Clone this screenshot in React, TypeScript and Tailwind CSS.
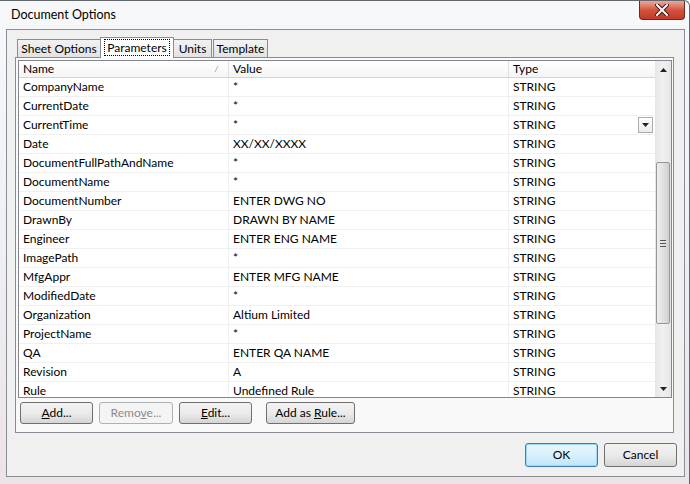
import React from "react";

const rows: [string, string][] = [
  ["CompanyName", "*"],
  ["CurrentDate", "*"],
  ["CurrentTime", "*"],
  ["Date", "XX/XX/XXXX"],
  ["DocumentFullPathAndName", "*"],
  ["DocumentName", "*"],
  ["DocumentNumber", "ENTER DWG NO"],
  ["DrawnBy", "DRAWN BY NAME"],
  ["Engineer", "ENTER ENG NAME"],
  ["ImagePath", "*"],
  ["MfgAppr", "ENTER MFG NAME"],
  ["ModifiedDate", "*"],
  ["Organization", "Altium Limited"],
  ["ProjectName", "*"],
  ["QA", "ENTER QA NAME"],
  ["Revision", "A"],
  ["Rule", "Undefined Rule"],
];

const Arrow = ({ down = false }: { down?: boolean }) => (
  <svg width="7" height="4" viewBox="0 0 7 4">
    {down ? <path d="M0 0h7L3.5 4z" fill="#222" /> : <path d="M0 4h7L3.5 0z" fill="#222" />}
  </svg>
);

const Button = ({
  children,
  w,
  disabled = false,
  primary = false,
  h = "h-[22px]",
}: {
  children: React.ReactNode;
  w: string;
  disabled?: boolean;
  primary?: boolean;
  h?: string;
}) => {
  let cls = "border-[#707070] bg-gradient-to-b from-[#f2f2f2] via-[#ebebeb] to-[#d5d5d5] text-black";
  if (disabled) cls = "border-[#adb2b5] bg-[#f4f4f4] text-[#8b8b8b]";
  if (primary) cls = "border-[#3c7fb1] bg-gradient-to-b from-[#eaf6fd] via-[#d9f0fc] to-[#bee6fd] text-black shadow-[inset_0_0_0_1px_#9fd6f5]";
  return (
    <div className={`${w} ${h} ${cls} border rounded-[3px] flex items-center justify-center text-[12px]`}>
      {children}
    </div>
  );
};

const Tab = ({ label, w }: { label: string; w: string }) => (
  <div className={`${w} h-[18px] border border-b-0 border-[#898c95] bg-gradient-to-b from-[#f2f2f2] to-[#e3e3e3] flex items-center justify-center text-[12px]`}>
    {label}
  </div>
);

export default function App() {
  return (
    <div
      className="w-[690px] h-[484px] overflow-hidden flex flex-col bg-gradient-to-b from-[#f7f8fa] via-[#eef0f4] to-[#ece3e7] border-t border-r border-[#62676e] rounded-tr-[6px] text-black"
      style={{ fontFamily: 'Lato, "Noto Sans", sans-serif' }}
    >
      {/* title bar */}
      <div className="h-[28px] flex items-start justify-between">
        <div className="pl-[11px] pt-[6px] text-[12.5px] leading-[16px]">Document Options</div>
        <div className="mr-[4px] w-[46px] h-[19px] rounded-b-[4px] border border-t-0 border-[#6b2a22] bg-gradient-to-b from-[#e9a99c] via-[#d3533e] to-[#c23a26] flex items-center justify-center">
          <svg width="14" height="12" viewBox="0 0 14 12">
            <path d="M2 1l10 10M12 1L2 11" stroke="#3d1410" strokeWidth="4" strokeLinecap="square" />
            <path d="M2 1l10 10M12 1L2 11" stroke="#fff" strokeWidth="2" strokeLinecap="square" />
          </svg>
        </div>
      </div>

      {/* client area */}
      <div className="ml-[6px] w-[679px] h-[448px] border border-[#8a8f96] bg-[#f0f0f0] flex flex-col">
        {/* tabs */}
        <div className="mt-[7px] ml-[10px] h-[20px] flex items-end relative z-10">
          <Tab label="Sheet Options" w="w-[84px]" />
          <div className="w-[74px] h-[21px] -mb-px border border-b-0 border-[#898c95] bg-white flex items-start justify-center pt-[1px] -mx-[1px] z-10">
            <div className="border border-dotted border-black px-[2px] leading-[15px] text-[12px]">Parameters</div>
          </div>
          <Tab label="Units" w="w-[39px]" />
          <div className="ml-[1px]">
            <Tab label="Template" w="w-[55px]" />
          </div>
        </div>

        {/* tab panel */}
        <div className="ml-[8px] w-[659px] h-[376px] border border-[#898c95] bg-[#f9f9f9] flex flex-col pl-[2px] pt-[2px]">
          <div className="w-[654px] h-[338px] border border-[#828790] bg-white flex overflow-hidden">
            <div className="w-[636px] flex flex-col overflow-hidden text-[12px]">
              {/* header */}
              <div className="h-[17px] flex shrink-0 border-b border-[#d5d5d5] bg-gradient-to-b from-white to-[#f5f5f5]">
                <div className="w-[210px] border-r border-[#e0e0e0] pl-[4px] flex items-center justify-between pr-[9px]">
                  <span>Name</span>
                  <svg width="5" height="8" viewBox="0 0 5 8">
                    <path d="M1 7L4 1" stroke="#b0b0b0" strokeWidth="1" />
                  </svg>
                </div>
                <div className="w-[280px] border-r border-[#e0e0e0] pl-[4px] flex items-center">Value</div>
                <div className="w-[146px] pl-[4px] flex items-center">Type</div>
              </div>
              {rows.map(([name, value]) => (
                <div key={name} className="h-[19px] shrink-0 flex border-b border-[#f0f0f0]">
                  <div className="w-[210px] border-r border-[#f0f0f0] pl-[4px] flex items-center">{name}</div>
                  <div className="w-[280px] border-r border-[#f0f0f0] pl-[4px] flex items-center">{value}</div>
                  <div className="w-[146px] pl-[4px] flex items-center justify-between pr-[2px]">
                    <span>STRING</span>
                    {name === "CurrentTime" && (
                      <div className="w-[15px] h-[16px] border border-[#acacac] bg-gradient-to-b from-white to-[#ececec] flex items-center justify-center">
                        <Arrow down />
                      </div>
                    )}
                  </div>
                </div>
              ))}
            </div>

            {/* scrollbar */}
            <div className="w-[16px] flex flex-col bg-gradient-to-r from-[#e6e6e6] via-[#f1f1f1] to-[#e6e6e6]">
              <div className="h-[17px] flex items-center justify-center">
                <Arrow />
              </div>
              <div className="mt-[84px] mx-[1px] h-[162px] rounded-[2px] border border-[#979797] bg-gradient-to-r from-[#eeeeee] via-[#e2e2e2] to-[#cfcfcf] flex flex-col items-center justify-center gap-[2px]">
                <div className="w-[6px] h-px bg-[#555]" />
                <div className="w-[6px] h-px bg-[#555]" />
                <div className="w-[6px] h-px bg-[#555]" />
              </div>
              <div className="flex-1" />
              <div className="h-[17px] flex items-center justify-center">
                <Arrow down />
              </div>
            </div>
          </div>

          {/* grid buttons */}
          <div className="mt-[4px] ml-[2px] flex items-center">
            <Button w="w-[73px]">
              <span>
                <u>A</u>dd...
              </span>
            </Button>
            <div className="ml-[6px]">
              <Button w="w-[74px]" disabled>
                <span>
                  Remo<u>v</u>e...
                </span>
              </Button>
            </div>
            <div className="ml-[6px]">
              <Button w="w-[73px]">
                <span>
                  <u>E</u>dit...
                </span>
              </Button>
            </div>
            <div className="ml-[14px]">
              <Button w="w-[89px]">
                <span>
                  Add as <u>R</u>ule...
                </span>
              </Button>
            </div>
          </div>
        </div>

        {/* dialog buttons */}
        <div className="mt-[10px] mr-[7px] flex justify-end gap-[6px]">
          <Button w="w-[73px]" h="h-[24px]" primary>
            OK
          </Button>
          <Button w="w-[73px]" h="h-[24px]">
            Cancel
          </Button>
        </div>
      </div>
    </div>
  );
}
